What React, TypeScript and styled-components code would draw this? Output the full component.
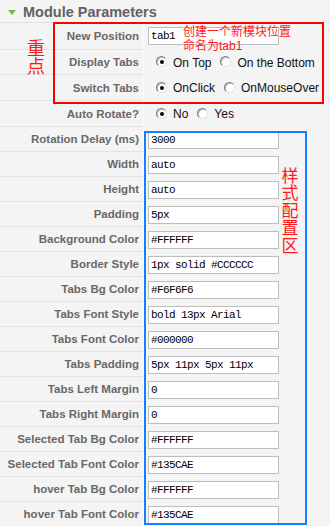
import React from "react";
import styled, { createGlobalStyle } from "styled-components";

const Global = createGlobalStyle`
  html, body { margin: 0; padding: 0; background: #f4f4f4; }
  body { font-family: "Liberation Sans", Arial, sans-serif; }
`;

const Page = styled.div`
  position: relative;
  width: 330px;
  height: 526px;
  overflow: hidden;
  background: #f4f4f4;
`;

const Header = styled.div`
  display: flex;
  align-items: center;
  gap: 7px;
  height: 23px;
  padding: 2px 0 0 8px;
  box-sizing: border-box;
  border-bottom: 1px solid #e0e0e0;
  font-size: 14.5px;
  font-weight: bold;
  color: #626262;
`;

const Triangle = styled.span`
  width: 0;
  height: 0;
  border-left: 4px solid transparent;
  border-right: 4px solid transparent;
  border-top: 5px solid #77b84a;
`;

const Row = styled.div<{ $h: number }>`
  display: flex;
  height: ${(p) => p.$h}px;
`;

const Label = styled.div`
  width: 144px;
  flex: none;
  box-sizing: border-box;
  display: flex;
  align-items: center;
  justify-content: flex-end;
  padding-right: 4px;
  border-bottom: 1px solid #e3e3e3;
  border-right: 1px solid #fbfbfb;
  font-size: 11.5px;
  font-weight: bold;
  color: #686868;
  white-space: nowrap;
`;

const Value = styled.div<{ $radio?: boolean }>`
  flex: 1;
  display: flex;
  align-items: ${(p) => (p.$radio ? "center" : "flex-start")};
  padding: ${(p) => (p.$radio ? "0 0 0 12px" : "4px 0 0 4px")};
`;

const TextBox = styled.div`
  width: 131px;
  height: 18px;
  box-sizing: border-box;
  border: 1px solid #bdbdbd;
  background: #fff;
  padding: 0 2px;
  font-family: "Liberation Mono", "Courier New", monospace;
  font-size: 11px;
  letter-spacing: -0.6px;
  line-height: 16px;
  color: #000;
  white-space: nowrap;
  overflow: hidden;
`;

const Options = styled.div`
  display: flex;
  align-items: center;
  gap: 4px;
`;

const Option = styled.label`
  display: inline-flex;
  align-items: center;
  font-size: 12px;
  color: #111;
  white-space: nowrap;
  margin-right: 5px;
`;

const RadioDot = styled.span<{ $on?: boolean }>`
  position: relative;
  width: 11px;
  height: 11px;
  box-sizing: border-box;
  border-radius: 50%;
  border: 1px solid;
  border-color: #7c7c7c #e4e4e4 #e4e4e4 #7c7c7c;
  background: #fff;
  box-shadow: inset 1px 1px 0 #bcbcbc;
  margin: 0 6px 2px 0;
  &::after {
    content: "";
    display: ${(p) => (p.$on ? "block" : "none")};
    position: absolute;
    left: 3px;
    top: 3px;
    width: 4px;
    height: 4px;
    border-radius: 50%;
    background: #000;
  }
`;

const Box = styled.div<{ $color: string }>`
  position: absolute;
  box-sizing: border-box;
  border: 2px solid ${(p) => p.$color};
  pointer-events: none;
`;

const Note = styled.div<{ $size: number; $lh: number }>`
  position: absolute;
  color: #ff1a1a;
  font-family: "Liberation Sans", "Noto Sans CJK SC", sans-serif;
  font-size: ${(p) => p.$size}px;
  line-height: ${(p) => p.$lh}px;
`;

const VerticalNote = styled(Note)`
  width: 18px;
  word-break: break-all;
  text-align: center;
`;

type Field =
  | { label: string; h: number; text: string }
  | { label: string; h: number; options: { t: string; on?: boolean }[] };

const fields: Field[] = [
  { label: "New Position", h: 27, text: "tab1" },
  { label: "Display Tabs", h: 25, options: [{ t: "On Top", on: true }, { t: "On the Bottom" }] },
  { label: "Switch Tabs", h: 26, options: [{ t: "OnClick", on: true }, { t: "OnMouseOver" }] },
  { label: "Auto Rotate?", h: 26, options: [{ t: "No", on: true }, { t: "Yes" }] },
  { label: "Rotation Delay (ms)", h: 25, text: "3000" },
  { label: "Width", h: 25, text: "auto" },
  { label: "Height", h: 25, text: "auto" },
  { label: "Padding", h: 25, text: "5px" },
  { label: "Background Color", h: 25, text: "#FFFFFF" },
  { label: "Border Style", h: 25, text: "1px solid #CCCCCC" },
  { label: "Tabs Bg Color", h: 25, text: "#F6F6F6" },
  { label: "Tabs Font Style", h: 25, text: "bold 13px Arial" },
  { label: "Tabs Font Color", h: 25, text: "#000000" },
  { label: "Tabs Padding", h: 25, text: "5px 11px 5px 11px" },
  { label: "Tabs Left Margin", h: 25, text: "0" },
  { label: "Tabs Right Margin", h: 25, text: "0" },
  { label: "Selected Tab Bg Color", h: 25, text: "#FFFFFF" },
  { label: "Selected Tab Font Color", h: 25, text: "#135CAE" },
  { label: "hover Tab Bg Color", h: 25, text: "#FFFFFF" },
  { label: "hover Tab Font Color", h: 25, text: "#135CAE" },
];

export default function App() {
  return (
    <Page>
      <Global />
      <Header>
        <Triangle />
        Module Parameters
      </Header>
      {fields.map((f) => (
        <Row key={f.label} $h={f.h}>
          <Label>{f.label}</Label>
          {"text" in f ? (
            <Value>
              <TextBox>{f.text}</TextBox>
            </Value>
          ) : (
            <Value $radio>
              <Options>
                {f.options.map((o) => (
                  <Option key={o.t}>
                    <RadioDot $on={o.on} />
                    {o.t}
                  </Option>
                ))}
              </Options>
            </Value>
          )}
        </Row>
      ))}
      <Box $color="#ff0000" style={{ left: 53, top: 22, width: 271, height: 82 }} />
      <Box $color="#1280ff" style={{ left: 144, top: 131, width: 163, height: 394 }} />
      <Note $size={18} $lh={18} style={{ left: 27, top: 40, width: 20 }}>
        重点
      </Note>
      <Note $size={12} $lh={13.5} style={{ left: 183, top: 26 }}>
        创建一个新模块位置
        <br />
        命名为tab1
      </Note>
      <VerticalNote $size={17} $lh={17.4} style={{ left: 281, top: 168 }}>
        样式配置区
      </VerticalNote>
    </Page>
  );
}
